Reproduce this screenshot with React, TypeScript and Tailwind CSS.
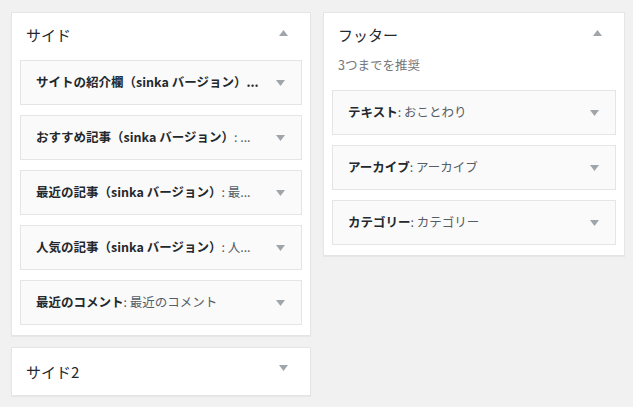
import React from 'react';

type Widget = { title: string; sub?: string };

const side: Widget[] = [
    { title: 'サイトの紹介欄（sinka バージョン）...' },
    { title: 'おすすめ記事（sinka バージョン）', sub: ': ...' },
    { title: '最近の記事（sinka バージョン）', sub: ': 最...' },
    { title: '人気の記事（sinka バージョン）', sub: ': 人...' },
    { title: '最近のコメント', sub: ': 最近のコメント' },
];

const footer: Widget[] = [
    { title: 'テキスト', sub: ': おことわり' },
    { title: 'アーカイブ', sub: ': アーカイブ' },
    { title: 'カテゴリー', sub: ': カテゴリー' },
];

function Arrow({ up }: { up?: boolean }) {
    return (
        <svg width="9" height="6" viewBox="0 0 9 6" className="shrink-0">
            <polygon points={up ? '0,6 9,6 4.5,0' : '0,0 9,0 4.5,6'} fill="#a0a5aa" />
        </svg>
    );
}

function WidgetRow({ w }: { w: Widget }) {
    return (
        <div className="h-[45px] bg-[#fafafa] border border-[#e5e5e5] flex items-center justify-between pl-[15px] pr-[16px]">
            <span className="text-[12.5px] whitespace-nowrap">
                <span className="font-bold text-[#23282d]">{w.title}</span>
                {w.sub && <span className="text-[#555d66]">{w.sub}</span>}
            </span>
            <Arrow />
        </div>
    );
}

function Panel({ title, desc, widgets }: { title: string; desc?: string; widgets: Widget[] }) {
    return (
        <div className="bg-white border border-[#e5e5e5] shadow-[0_1px_1px_rgba(0,0,0,0.04)]">
            <div className="flex justify-between items-start pl-[14px] pr-[22px] pt-[12px]">
                <h2 className="text-[15px] text-[#23282d] leading-[20px]">{title}</h2>
                <div className="pt-[5px]">
                    <Arrow up />
                </div>
            </div>
            {desc ? (
                <p className="text-[12.5px] text-[#72777c] pl-[14px] mt-[11px] mb-[16px] leading-[18px]">{desc}</p>
            ) : (
                <div className="h-[15px]" />
            )}
            <div className="flex flex-col gap-[10px] px-[8px] pb-[10px]">
                {widgets.map((w, i) => (
                    <WidgetRow key={i} w={w} />
                ))}
            </div>
        </div>
    );
}

export default function App() {
    return (
        <div
            className="w-[633px] h-[407px] bg-[#f1f1f1] flex gap-[12px] pl-[11px] pt-[12px] overflow-hidden"
            style={{ fontFamily: '"Noto Sans CJK JP", "Noto Sans", sans-serif' }}
        >
            <div className="w-[300px] flex flex-col gap-[11px]">
                <Panel title="サイド" widgets={side} />
                <div className="h-[49px] bg-white border border-[#e5e5e5] shadow-[0_1px_1px_rgba(0,0,0,0.04)] flex justify-between items-center pl-[14px] pr-[22px]">
                    <h2 className="text-[15px] text-[#23282d] mt-[2px]">サイド2</h2>
                    <div className="mb-[8px]">
                        <Arrow />
                    </div>
                </div>
            </div>
            <div className="w-[302px]">
                <Panel title="フッター" desc="3つまでを推奨" widgets={footer} />
            </div>
        </div>
    );
}
